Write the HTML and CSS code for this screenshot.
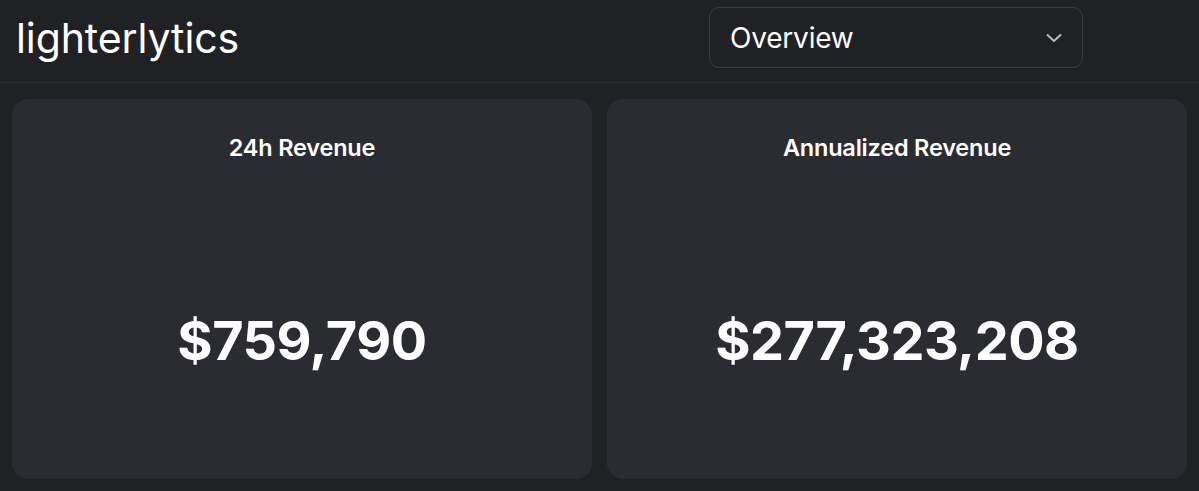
FILE: index.html
```html
<!DOCTYPE html>
<html>
<head>
<meta charset="utf-8">
<link rel="stylesheet" href="styles.css">
</head>
<body>
<header class="topbar">
  <div class="logo">lighterlytics</div>
  <div class="select">
    <span class="select-label">Overview</span>
    <svg class="chev" width="20" height="20" viewBox="0 0 20 20"><path d="M3.5 7 L10 13 L16.5 7" fill="none" stroke="#b8bbc0" stroke-width="2" stroke-linecap="round" stroke-linejoin="round"/></svg>
  </div>
</header>
<main class="cards">
  <section class="card">
    <h2 class="card-title">24h Revenue</h2>
    <div class="card-value">$759,790</div>
  </section>
  <section class="card">
    <h2 class="card-title">Annualized Revenue</h2>
    <div class="card-value">$277,323,208</div>
  </section>
</main>
</body>
</html>
```
FILE: styles.css
```css
html, body {
  margin: 0;
  padding: 0;
  background: #1f2125;
  color: #ffffff;
  font-family: Inter, "Noto Sans", sans-serif;
}
.topbar {
  height: 83px;
  box-sizing: border-box;
  border-bottom: 1px solid #2b2e32;
  display: flex;
  align-items: center;
  padding: 0 0 0 16px;
  position: relative;
}
.logo {
  font-size: 41px;
  font-weight: 400;
  letter-spacing: -0.1px;
  color: #ffffff;
  margin-top: -6px;
}
.select {
  position: absolute;
  left: 709px;
  top: 7px;
  width: 374px;
  height: 61px;
  box-sizing: border-box;
  border: 1px solid #383b40;
  border-radius: 10px;
  display: flex;
  align-items: center;
  justify-content: space-between;
  padding: 0 18px 0 20px;
}
.select-label {
  font-size: 28px;
  font-weight: 400;
  color: #ffffff;
  letter-spacing: -0.2px;
}
.cards {
  display: grid;
  grid-template-columns: 1fr 1fr;
  gap: 15px;
  padding: 16px 12px 0 12px;
}
.card {
  background: #2a2c31;
  border-radius: 16px;
  height: 380px;
  display: flex;
  flex-direction: column;
  align-items: center;
}
.card-title {
  margin: 34px 0 0 0;
  font-size: 23.5px;
  font-weight: 600;
  letter-spacing: -0.2px;
}
.card-value {
  margin-top: 146px;
  font-size: 54px;
  font-weight: 700;
  letter-spacing: -0.5px;
}
```
